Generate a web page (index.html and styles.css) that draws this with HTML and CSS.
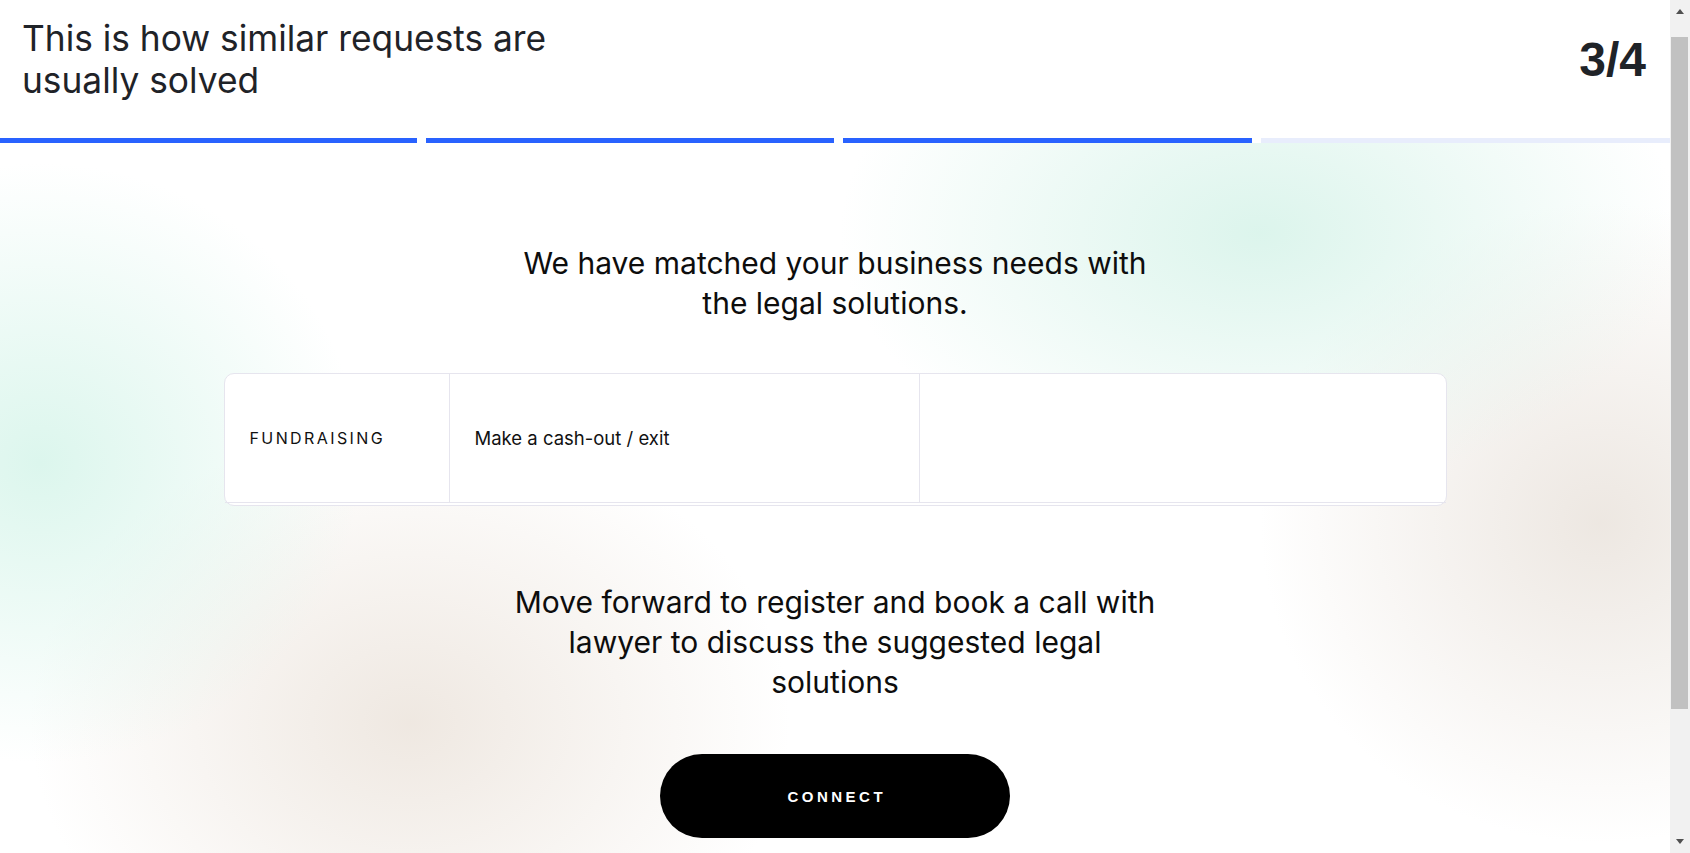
FILE: index.html
```html
<!DOCTYPE html>
<html lang="en">
<head>
<meta charset="utf-8">
<title>Legal solutions</title>
<link rel="stylesheet" href="styles.css">
</head>
<body>
<div class="page">
  <header class="header">
    <h1 class="title">This is how similar requests are usually solved</h1>
    <div class="step">3/4</div>
  </header>
  <div class="progress">
    <span class="bar done"></span>
    <span class="bar done"></span>
    <span class="bar done"></span>
    <span class="bar"></span>
  </div>
  <main class="main">
    <p class="lead">We have matched your business needs with the legal solutions.</p>
    <div class="card">
      <div class="row">
        <div class="cell cat">FUNDRAISING</div>
        <div class="cell sol">Make a cash-out / exit</div>
        <div class="cell empty"></div>
      </div>
    </div>
    <p class="lead lead2">Move forward to register and book a call with lawyer to discuss the suggested legal solutions</p>
    <button class="connect" type="button">CONNECT</button>
  </main>
</div>
<div class="scrollbar" aria-hidden="true">
  <span class="arrow up"></span>
  <span class="thumb"></span>
  <span class="arrow down"></span>
</div>
</body>
</html>
```
FILE: styles.css
```css
*, *::before, *::after {
  box-sizing: border-box;
}
html, body {
  margin: 0;
  padding: 0;
  background: #ffffff;
}
body {
  font-family: Inter, "Noto Sans", sans-serif;
  color: #111;
  padding-right: 20px;
  overflow: hidden;
}
.page {
  min-height: 853px;
  display: flex;
  flex-direction: column;
}
.header {
  display: flex;
  justify-content: space-between;
  align-items: center;
  padding: 18px 24px 37px 22px;
  height: 138px;
}
.title {
  margin: 0;
  font-size: 35.3px;
  font-weight: 400;
  line-height: 41.6px;
  color: #1f2328;
  max-width: 580px;
}
.step {
  font-family: "Liberation Sans", Arial, sans-serif;
  font-weight: 700;
  font-size: 48px;
  color: #1f2328;
}
.progress {
  display: grid;
  grid-template-columns: 417px 408px 409px 1fr;
  gap: 9px;
  height: 5px;
}
.bar {
  display: block;
  height: 5px;
  background: #e8edfc;
}
.bar.done {
  background: #2962ff;
}
.main {
  flex: 1;
  display: flex;
  flex-direction: column;
  align-items: center;
  padding-top: 100px;
  background:
    radial-gradient(ellipse 320px 300px at 40px 320px, rgba(216, 245, 235, 0.9), rgba(216, 245, 235, 0) 100%),
    radial-gradient(ellipse 380px 300px at 410px 580px, rgba(236, 228, 220, 0.85), rgba(236, 228, 220, 0) 100%),
    radial-gradient(ellipse 420px 260px at 1260px 90px, rgba(218, 244, 235, 0.95), rgba(218, 244, 235, 0) 100%),
    radial-gradient(ellipse 340px 320px at 1600px 380px, rgba(236, 230, 224, 0.95), rgba(236, 230, 224, 0) 100%),
    #ffffff;
}
.lead {
  margin: 0;
  max-width: 655px;
  text-align: center;
  font-size: 30px;
  line-height: 40px;
  color: #0d0d0d;
}
.card {
  margin-top: 50px;
  width: 1223px;
  height: 133px;
  background: #ffffff;
  border: 1px solid #e6e5ee;
  border-radius: 10px;
  padding-bottom: 2px;
}
.row {
  display: grid;
  grid-template-columns: 224px 470px 1fr;
  height: 129px;
  border-bottom: 1px solid #e6e5ee;
}
.cell {
  display: flex;
  align-items: center;
  padding: 0 25px;
}
.cell + .cell {
  border-left: 1px solid #e6e5ee;
}
.cat {
  font-size: 16px;
  letter-spacing: 2.4px;
  color: #111;
}
.sol {
  font-size: 18.5px;
  color: #111;
}
.lead2 {
  margin-top: 76px;
}
.connect {
  margin-top: 52px;
  width: 350px;
  height: 84px;
  border: none;
  border-radius: 42px;
  background: #000;
  color: #fff;
  font-family: "Liberation Sans", Arial, sans-serif;
  font-weight: 700;
  font-size: 15px;
  letter-spacing: 3.5px;
  padding: 0 0 0 3.5px;
  cursor: pointer;
}
.scrollbar {
  position: fixed;
  top: 0;
  right: 0;
  bottom: 0;
  width: 20px;
  background: #f1f1f1;
  display: flex;
  flex-direction: column;
  align-items: center;
}
.arrow {
  display: block;
  width: 0;
  height: 0;
  border-left: 4.5px solid transparent;
  border-right: 4.5px solid transparent;
}
.arrow.up {
  margin-top: 9px;
  border-bottom: 5px solid #505050;
}
.arrow.down {
  margin-top: auto;
  margin-bottom: 9px;
  border-top: 5px solid #505050;
}
.thumb {
  display: block;
  margin-top: 23px;
  margin-left: -1px;
  width: 17px;
  height: 672px;
  background: #c1c1c1;
}
```
